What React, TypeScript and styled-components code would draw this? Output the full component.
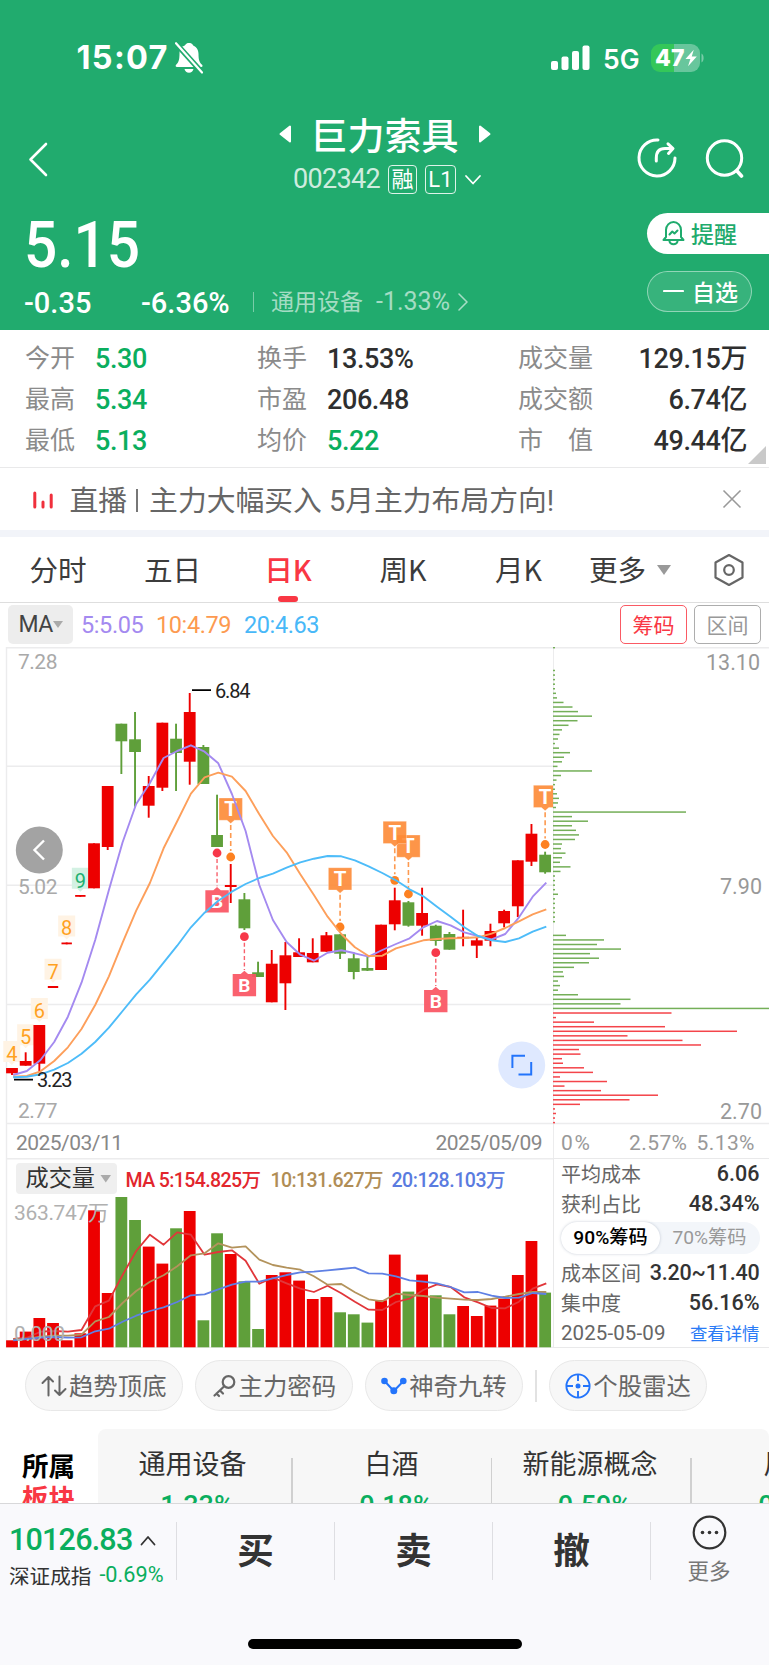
import React from "react";
import styled, { createGlobalStyle } from "styled-components";

const CJK = `"Noto Sans CJK SC", sans-serif`;
const NUM = `Roboto, "Noto Sans CJK SC", sans-serif`;
const GREEN = "#0aae5e";
const UP = "#ed0000";
const DOWN = "#5f9f3a";

const Global = createGlobalStyle`
  * { box-sizing: border-box; }
  body { margin: 0; background: #fff; }
`;

const Page = styled.div`
  width: 769px;
  height: 1665px;
  overflow: hidden;
  display: flex;
  flex-direction: column;
  background: #fff;
  font-family: ${CJK};
  color: #333;
  white-space: nowrap;
  line-height: 1;
`;

const Num = styled.span<{ $size: number; $color?: string; $weight?: number; $ls?: number }>`
  font-family: ${NUM};
  font-size: ${(p) => p.$size}px;
  font-weight: ${(p) => p.$weight ?? 400};
  letter-spacing: ${(p) => p.$ls ?? 0}px;
  color: ${(p) => p.$color ?? "inherit"};
`;

/* ---------- header ---------- */
const Header = styled.header`
  height: 330px;
  flex: none;
  background: #21ab6e;
  color: #fff;
  display: flex;
  flex-direction: column;
`;
const StatusBar = styled.div`
  height: 113px;
  flex: none;
  padding: 3px 65px 0 76.5px;
  display: flex;
  align-items: center;
  font-family: Inter, sans-serif;
`;
const Clock = styled.span`
  font-size: 32.5px;
  font-weight: 700;
  width: 98.5px;
  letter-spacing: 1.3px;
`;
const Network = styled.span`
  font-size: 26.5px;
  font-weight: 600;
  margin: 2px 11px 0 12px;
  width: 37px;
`;
const Spacer = styled.div`
  flex: 1;
`;
const Battery = styled.div`
  width: 49px;
  height: 28px;
  border-radius: 9px;
  background: linear-gradient(90deg, #34c759 0 46%, rgba(255, 255, 255, 0.32) 46%);
  display: flex;
  align-items: center;
  padding-left: 4px;
  font-size: 23px;
  font-weight: 800;
  letter-spacing: 0.2px;
`;
const Nav = styled.div`
  height: 92px;
  flex: none;
  display: flex;
  justify-content: space-between;
  padding: 0 24px 0 28px;
`;
const NavSide = styled.div<{ $right?: boolean }>`
  width: 110px;
  display: flex;
  justify-content: ${(p) => (p.$right ? "flex-end" : "flex-start")};
  gap: 28px;
  padding-top: 25px;
`;
const TitleBlock = styled.div`
  display: flex;
  flex-direction: column;
  align-items: center;
  padding: 1px 0 0 2px;
`;
const TitleRow = styled.div`
  height: 42px;
  margin-right: 6px;
  display: flex;
  align-items: center;
  gap: 19px;
`;
const Title = styled.h1`
  margin: 0;
  font-size: 37px;
  font-weight: 500;
`;
const CodeRow = styled.div`
  height: 52px;
  display: flex;
  align-items: center;
  gap: 8px;
`;
const Badge = styled.span<{ $w: number }>`
  width: ${(p) => p.$w}px;
  height: 29px;
  border: 1.5px solid rgba(255, 255, 255, 0.85);
  border-radius: 4px;
  display: flex;
  align-items: center;
  justify-content: center;
  font: 400 22px/1 ${NUM};
`;
const QuoteRow = styled.div`
  display: flex;
  justify-content: space-between;
  height: 122px;
`;
const PriceBlock = styled.div`
  padding-left: 24px;
  display: flex;
  flex-direction: column;
`;
const Price = styled.div`
  height: 80px;
  padding-top: 2px;
  display: flex;
  align-items: center;
  font: 500 64px/1 ${NUM};
  transform: scaleX(0.915);
  transform-origin: left;
`;
const ChangeRow = styled.div`
  height: 36px;
  display: flex;
  align-items: center;
`;
const ChangeValue = styled.span<{ $w: number }>`
  width: ${(p) => p.$w}px;
  font: 500 29px/1 ${NUM};
`;
const Industry = styled.div`
  display: flex;
  align-items: center;
  color: rgba(255, 255, 255, 0.6);
  font-size: 23px;
  border-left: 1.5px solid rgba(255, 255, 255, 0.4);
  height: 20px;
  padding-left: 17px;
  margin-bottom: 3px;
`;
const IndustryName = styled.span`
  padding-bottom: 3px;
`;
const IndustryRate = styled.span`
  margin: 0 7px 0 13px;
  font: 400 25px/1 ${NUM};
`;
const Actions = styled.div`
  width: 122px;
  padding-top: 8px;
  display: flex;
  flex-direction: column;
  gap: 17px;
`;
const ActionPill = styled.div<{ $solid?: boolean }>`
  height: 41px;
  width: ${(p) => (p.$solid ? 122 : 105)}px;
  border-radius: ${(p) => (p.$solid ? "21px 0 0 21px" : "21px")};
  background: ${(p) => (p.$solid ? "#fff" : "rgba(255,255,255,.1)")};
  border: ${(p) => (p.$solid ? "0" : "1.5px solid rgba(255,255,255,.45)")};
  color: ${(p) => (p.$solid ? "#1fab6d" : "#fff")};
  display: flex;
  align-items: center;
  gap: ${(p) => (p.$solid ? 6 : 8)}px;
  padding-left: 15px;
  padding-bottom: 1px;
  font-size: 23px;
  font-weight: 500;
`;

/* ---------- statistics ---------- */
const Stats = styled.section`
  height: 138px;
  flex: none;
  border-bottom: 1.5px solid #e9e9ea;
  padding: 8px 3px 0 25px;
  display: grid;
  grid-template-columns: 232px 261px 1fr;
  grid-auto-rows: 41px;
  position: relative;
`;
const Stat = styled.div<{ $wide?: boolean }>`
  display: flex;
  align-items: center;
  justify-content: ${(p) => (p.$wide ? "space-between" : "flex-start")};
  padding-right: ${(p) => (p.$wide ? 19 : 0)}px;
  gap: 20px;
`;
const StatLabel = styled.span`
  font-size: 25px;
  color: #8b8b8b;
  white-space: pre;
  padding-bottom: 5px;
`;
const StatValue = styled.span<{ $down?: boolean }>`
  font: 500 27px/1 ${NUM};
  letter-spacing: -0.4px;
  padding-top: 2px;
  color: ${(p) => (p.$down ? GREEN : "#2f2f2f")};
`;
const Corner = styled.i`
  position: absolute;
  right: 3px;
  bottom: 3px;
  border: 9px solid transparent;
  border-right-color: #c9c9c9;
  border-bottom-color: #c9c9c9;
`;

/* ---------- promo ---------- */
const Promo = styled.section`
  height: 69px;
  flex: none;
  border-bottom: 7px solid #f2f4f9;
  padding: 0 27px 0 32.5px;
  display: flex;
  align-items: center;
  color: #666;
  font-size: 28.8px;
`;
const PromoText = styled.span`
  margin-left: 17px;
  padding-top: 4px;
  display: flex;
  align-items: center;
  font-family: ${NUM};
`;
const PromoRule = styled.i`
  width: 2px;
  height: 23px;
  margin: 0 11px 0 9px;
  background: #777;
`;

/* ---------- tabs ---------- */
const Tabs = styled.nav`
  height: 66px;
  flex: none;
  border-bottom: 1.5px solid #dedede;
  display: flex;
  font-size: 28.6px;
`;
const Tab = styled.div<{ $w: number; $active?: boolean }>`
  width: ${(p) => p.$w}px;
  flex: none;
  display: flex;
  align-items: center;
  justify-content: center;
  position: relative;
  color: ${(p) => (p.$active ? "#f93744" : "#3c3c3c")};
  font-weight: ${(p) => (p.$active ? 500 : 400)};
  gap: 11px;
  &::after {
    content: "";
    display: ${(p) => (p.$active ? "block" : "none")};
    position: absolute;
    bottom: 0;
    width: 20px;
    height: 6px;
    border-radius: 3px;
    background: #f93744;
  }
`;
const Caret = styled.i<{ $s: number; $c: string }>`
  width: 0;
  height: 0;
  border: ${(p) => p.$s}px solid transparent;
  border-top: ${(p) => p.$s * 1.4}px solid ${(p) => p.$c};
  border-bottom: 0;
`;

/* ---------- indicator bar ---------- */
const IndicatorBar = styled.div`
  height: 44px;
  flex: none;
  padding: 2px 8px 3px;
  display: flex;
  align-items: center;
`;
const MaButton = styled.div`
  width: 65px;
  height: 39px;
  margin-right: 8px;
  background: #ededed;
  border-radius: 5px;
  display: flex;
  align-items: center;
  justify-content: center;
`;
const MaValue = styled.span<{ $c: string; $w: number }>`
  width: ${(p) => p.$w}px;
  color: ${(p) => p.$c};
  padding-top: 2px;
  font: 400 23.5px/1 ${NUM};
  letter-spacing: -0.4px;
`;
const BoxButton = styled.div<{ $on?: boolean }>`
  width: 67px;
  height: 39px;
  margin-left: 7px;
  border: 1.5px solid ${(p) => (p.$on ? "#fa5a64" : "#adadad")};
  border-radius: 5px;
  color: ${(p) => (p.$on ? "#f93744" : "#999")};
  display: flex;
  align-items: center;
  justify-content: center;
  font-size: 21px;
`;

/* ---------- charts ---------- */
const Charts = styled.section`
  display: grid;
  grid-template-columns: 553px 216px;
  grid-template-rows: 511px 190px;
  flex: none;
`;
const Plot = styled.svg`
  display: block;
  font-family: ${NUM};
`;
const CostPanel = styled.div`
  border-left: 1.5px solid #e9e9ea;
  border-top: 1.5px solid #e9e9ea;
  border-bottom: 1.5px solid #e9e9ea;
  padding: 0 9.5px 0 7px;
  color: #666;
  font-size: 20px;
`;
const CostRow = styled.div`
  height: 30px;
  display: flex;
  align-items: center;
  justify-content: space-between;
`;
const Toggle = styled.div`
  height: 32px;
  width: 199px;
  margin: 3px 0 4px;
  border-radius: 16px;
  background: #f3f6fa;
  display: flex;
`;
const ToggleItem = styled.div<{ $on?: boolean }>`
  width: 99px;
  border-radius: 16px;
  display: flex;
  align-items: center;
  justify-content: center;
  font: ${(p) => (p.$on ? 500 : 400)} 19.2px/1 ${NUM};
  color: ${(p) => (p.$on ? "#000" : "#999")};
  background: ${(p) => (p.$on ? "#fff" : "none")};
  box-shadow: ${(p) => (p.$on ? "0 0 3px rgba(60,80,110,.28)" : "none")};
`;
const Detail = styled.a`
  color: #2a7bf6;
  font-size: 17.4px;
`;

/* ---------- tools ---------- */
const Tools = styled.section`
  height: 81px;
  flex: none;
  padding: 12px 0 0 25px;
  display: flex;
  gap: 12.6px;
`;
const Tool = styled.div`
  width: 157.5px;
  flex: none;
  height: 51px;
  border: 1.5px solid #e8e8e8;
  border-radius: 26px;
  background: #f7f7f7;
  display: flex;
  align-items: center;
  justify-content: center;
  gap: 2px;
  font-size: 24.4px;
  color: #666;
`;
const ToolDivider = styled.i`
  width: 1.5px;
  height: 32px;
  margin-top: 10px;
  background: #e2e2e2;
`;

/* ---------- sectors ---------- */
const Sectors = styled.section`
  height: 74px;
  flex: none;
  display: flex;
  overflow: hidden;
`;
const SectorHead = styled.div`
  width: 98px;
  flex: none;
  padding: 20px 0 0 22px;
  font-size: 26.5px;
  line-height: 32px;
  font-weight: 700;
  color: #000;
`;
const SectorHeadRed = styled.div`
  color: #f93744;
`;
const SectorList = styled.div`
  width: 671px;
  background: #f7f7f7;
  border-radius: 8px 8px 0 0;
  display: flex;
  overflow: hidden;
`;
const Sector = styled.div<{ $w: number; $shift?: number }>`
  width: ${(p) => p.$w}px;
  flex: none;
  display: flex;
  flex-direction: column;
  align-items: center;
  padding: 20px ${(p) => p.$shift ?? 0}px 0 0;
  gap: 17px;
  font-size: 27px;
  color: #333;
`;
const SectorRule = styled.i`
  flex: none;
  width: 1.5px;
  margin-top: 29px;
  background: #d0d0d0;
`;

/* ---------- footer ---------- */
const Footer = styled.footer`
  height: 162px;
  flex: none;
  background: #f9f9fc;
  border-top: 1.5px solid #d8d8da;
  display: flex;
  flex-direction: column;
  align-items: center;
  justify-content: space-between;
  padding-bottom: 16px;
`;
const Trade = styled.div`
  width: 769px;
  height: 92px;
  display: flex;
`;
const IndexBox = styled.div`
  width: 176px;
  padding: 21px 0 0 9px;
`;
const IndexRow = styled.div<{ $h: number }>`
  height: ${(p) => p.$h}px;
  display: flex;
  align-items: center;
  gap: 8px;
  font-size: 20.6px;
  color: #333;
`;
const TradeButton = styled.div<{ $w: number }>`
  width: ${(p) => p.$w}px;
  height: 58px;
  margin-top: 18px;
  padding-bottom: 3px;
  border-left: 1.5px solid #dedee2;
  display: flex;
  align-items: center;
  justify-content: center;
  font-size: 36.5px;
  font-weight: 700;
  color: #333;
`;
const MoreButton = styled.div`
  width: 117px;
  height: 58px;
  margin-top: 18px;
  border-left: 1.5px solid #dedee2;
  display: flex;
  flex-direction: column;
  align-items: center;
  font-size: 21.5px;
  color: #777;
  gap: 9px;
  & > svg {
    margin-top: -7px;
    flex: none;
  }
`;
const HomeBar = styled.div`
  width: 274px;
  height: 10px;
  border-radius: 5px;
  background: #000;
`;

/* ---------- chart data ---------- */
const STEP = 13.67;
const cx = (i: number) => 12 + STEP * i;

// [high, body top, body bottom, low, rising]
const candles: [number, number, number, number, 0 | 1][] = [
  [1068, 1068, 1073.3, 1075, 1],
  [1052.3, 1061, 1065.7, 1065.7, 1],
  [1025, 1025, 1063.7, 1071.6, 1],
  [986, 986, 988, 988, 1],
  [942.5, 942.5, 944.3, 944.3, 1],
  [895, 895, 896.8, 896.8, 1],
  [843.3, 843.3, 888.3, 888.3, 1],
  [786, 786, 847, 850, 1],
  [723.7, 723.7, 741.3, 774, 0],
  [712, 739.3, 752, 806.7, 0],
  [776, 786, 805.7, 817.7, 1],
  [722.7, 722.7, 787.7, 791, 1],
  [723.7, 738.7, 753, 791, 0],
  [693, 712, 761.7, 784.7, 1],
  [745, 747, 784, 784, 0],
  [794.7, 835, 847, 847, 0],
  [864, 885, 887, 903, 1],
  [893, 899.3, 928.3, 930, 0],
  [961.7, 972.3, 977, 977, 0],
  [950, 963.7, 1002.3, 1002.3, 1],
  [942, 955.3, 983.3, 1010, 1],
  [938.3, 952.3, 957, 957, 1],
  [938.3, 953, 962.3, 962.3, 1],
  [932, 935.3, 951.7, 951.7, 1],
  [934.3, 934.3, 953.7, 959, 0],
  [954, 958.3, 972, 979.3, 0],
  [956.7, 968, 970.7, 971, 0],
  [924.7, 924.7, 970, 970, 1],
  [887.7, 900.3, 924.3, 930.3, 1],
  [901, 902.3, 925.7, 926.7, 0],
  [887.7, 913, 925.7, 935.7, 1],
  [924.7, 925.7, 941, 945.7, 0],
  [932, 934, 949.7, 949.7, 0],
  [909.7, 936.8, 938.3, 946.3, 1],
  [938, 940.3, 945.7, 958, 1],
  [923.7, 931, 940.7, 946.3, 1],
  [909.7, 911, 923.3, 927.3, 1],
  [860.3, 860.3, 906.3, 917, 1],
  [824, 833.7, 861.7, 866, 1],
  [851.7, 854.7, 872.3, 873.7, 0],
];

const ma5 = [1075, 1071, 1060, 1042, 1016.7, 982.7, 940, 890, 842.3, 804, 783, 758, 751, 745.3, 751.7, 763.3, 794, 831, 885, 920, 942, 954.7, 960.7, 952.7, 950.3, 953.3, 956.7, 950, 944, 938.3, 927.3, 921, 925.3, 932.3, 936, 939.3, 934, 917.3, 896.7, 882.7];
const ma10 = [1076.7, 1076, 1071.3, 1061, 1047.3, 1029, 1005, 976.3, 942.7, 910.7, 883, 848.3, 821.3, 793.7, 777.3, 772.7, 776.7, 791, 814.3, 836, 852.3, 874.3, 895, 916.7, 934, 947.3, 956, 955.7, 948.3, 944.3, 940.3, 939, 938.3, 938, 937.3, 933.7, 928, 921.3, 914.3, 909.3];
const ma20 = [1077.3, 1076.7, 1074.3, 1069.7, 1063, 1053.7, 1042, 1027.7, 1011, 994.3, 979.7, 962.7, 945.7, 927.3, 912.7, 900.7, 891.7, 884, 878, 873.7, 867.7, 862.3, 858.7, 856, 856.3, 860.3, 866.3, 873, 880.3, 889.3, 896.3, 906.7, 916.7, 927.3, 936, 940.3, 942, 938.3, 931.7, 926.7];

const line = (ys: number[]) => ys.map((y, i) => `${(cx(i) + 1.2).toFixed(1)},${y}`).join(" ");

// volume bars: height above the baseline and direction
const volumes: [number, 0 | 1][] = [
  [7, 1], [15.7, 1], [29.3, 1], [24.3, 1], [7, 1], [14, 1], [137, 1], [54.3, 1], [150.3, 0], [127.3, 0],
  [100.7, 1], [83.7, 1], [119, 0], [136.3, 1], [27, 0], [114, 0], [93.3, 1], [66, 0], [18.3, 0], [72.3, 1],
  [75, 1], [66.7, 1], [48.3, 1], [50.3, 1], [35, 0], [33, 0], [24.7, 0], [47, 1], [92.7, 1], [55.7, 0],
  [72.7, 1], [52, 0], [33, 0], [41.3, 1], [31.3, 1], [41.7, 1], [48.7, 1], [72.3, 1], [106.3, 1], [54.7, 0],
];
const vol5 = [552, 548, 530, 528, 530, 525, 454, 437, 360, 288, 239, 269, 232, 239, 299, 291, 286, 317, 386, 368, 385, 401, 411, 392, 415, 440, 464, 465, 441, 431, 405, 388, 396, 427, 442, 459, 460, 440, 401, 385];
const vol10 = [553, 552, 545, 542, 542, 539, 499, 486, 444, 408, 380, 361, 334, 301, 295, 265, 278, 274, 314, 330, 338, 344, 364, 389, 387, 412, 433, 439, 416, 420, 423, 428, 431, 434, 435, 432, 425, 417, 411, 411];
const vol20 = [556, 552, 548, 546, 548, 547, 529, 521, 500, 482, 468, 457, 441, 421, 418, 403, 389, 380, 380, 370, 360, 352, 350, 346, 342, 338, 355, 356, 364, 376, 380, 385, 396, 412, 411, 422, 429, 428, 414, 417];
const volLine = (v: number[]) => line(v.map((y) => +(1155 + y / 3).toFixed(1)));

// cost distribution, one bar per price level from the top down
const chips = [
  2, 0, 0, 0, 0, 2, 2, 2, 2, 2,
  3, 4, 10.5, 19.5, 25, 39, 24.5, 15.5, 9, 6.5, 5, 2, 6, 17, 11, 9, 4.5, 39, 8, 3.5,
  2, 2, 4, 6, 5, 3, 133, 19, 35, 19, 23, 26, 22, 9, 8, 12.5, 9, 7, 17.5, 7.5,
  2, 2, 2, 2, 5, 2, 2, 2, 2, 2, 2, 0, 0,
  13, 51, 44, 68, 37, 46, 36, 21, 10, 11, 5, 7, 5, 25, 77.5, 67.5, 216,
  118.5, 3, 41, 112, 184, 74.5, 129.5, 148, 26, 27.5, 9, 10, 31, 40, 7, 54, 11.5, 48, 105, 76.5, 27, 2, 3, 2, 2,
];
const FIRST_PROFIT_LEVEL = 80;

// [candle, flag top, dot y]
const sells: [number, number, number][] = [
  [16, 798, 857],
  [24, 867.7, 927],
  [29, 835, 894],
  [28, 821.3, 880.3],
  [39, 785.3, 844.5],
];
const buys: [number, number, number][] = [
  [15, 890.3, 853],
  [17, 974, 936.7],
  [31, 990, 952.7],
];
const counts: [string, number, number][] = [
  ["4", 0, 1041],
  ["5", 1, 1024.3],
  ["6", 2, 998],
  ["7", 3, 958.7],
  ["8", 4, 915.5],
  ["9", 5, 867.7],
];

const GRID = "#ececed";

function SellFlag({ x, y, dot }: { x: number; y: number; dot: number }) {
  return (
    <g>
      <line x1={x} x2={x} y1={y + 27} y2={dot - 6} stroke="#fd9a50" strokeWidth="1.6" strokeDasharray="5 3" />
      <circle cx={x} cy={dot} r="4.4" fill="#fd8121" />
      <path d={`M${x - 11.7} ${y}h23.4v22.3h-8l-3.7 3.2l-3.7-3.2h-8z`} fill="#fd8a35" fillOpacity=".9" stroke="#fff" strokeOpacity=".5" strokeWidth=".6" />
      <text x={x} y={y + 18.3} fontSize="20.5" fontWeight="700" fill="#fff" textAnchor="middle">T</text>
    </g>
  );
}

function BuyFlag({ x, y, dot }: { x: number; y: number; dot: number }) {
  return (
    <g>
      <line x1={x} x2={x} y1={dot + 6} y2={y - 4} stroke="#f7606c" strokeWidth="1.4" strokeDasharray="4 2.6" />
      <circle cx={x} cy={dot} r="4.4" fill="#f7384a" />
      <path d={`M${x - 11.7} ${y}h8l3.7-3.2l3.7 3.2h8v22.2h-23.4z`} fill="#fa5563" fillOpacity=".93" />
      <text x={x} y={y + 18} fontSize="19" fontWeight="700" fill="#fff" textAnchor="middle">B</text>
    </g>
  );
}

function KLine() {
  return (
    <Plot width="553" height="511" viewBox="0 647 553 511">
      <g stroke={GRID} strokeWidth="1.4">
        <path d="M6 647.7H553M6 766.2H553M6 885.3H553M6 1004.5H553M6 1123.5H553M6.5 647V1158" fill="none" />
      </g>
      <g fill="#a9a9a9" fontSize="21">
        <text x="18" y="669" textLength="39.5">7.28</text>
        <text x="18" y="893.5" textLength="39.5">5.02</text>
        <text x="18" y="1118" textLength="39.5">2.77</text>
      </g>
      {counts.map(([t, i, y]) => {
        const x = i === 0 ? 11.8 : cx(i);
        return (
          <g key={t}>
            <path d={`M${x - 8.5} ${y}h17v21h-5.5l-3 3l-3-3h-5.5z`} fill={t === "9" ? "#d3f1e3" : "#fff3e4"} />
            <text x={x} y={y + 19.8} fontSize="20" textAnchor="middle" fill={t === "9" ? "#22b071" : "#ffa11f"}>{t}</text>
          </g>
        );
      })}
      {candles.map(([h, t, b, l, up], i) => {
        const w = i > 2 && i < 6 ? 10.4 : 11.8;
        return (
          <g key={i} fill={up ? UP : DOWN}>
            <rect x={cx(i) - 0.95} y={h} width="1.9" height={l - h} />
            <rect x={cx(i) - w / 2} y={t} width={w} height={b - t} />
          </g>
        );
      })}
      {buys.map(([i, y, d]) => <BuyFlag key={i} x={cx(i)} y={y} dot={d} />)}
      {sells.map(([i, y, d]) => <SellFlag key={i} x={cx(i)} y={y} dot={d} />)}
      <g fill="none" strokeWidth="1.9" strokeLinejoin="round">
        <polyline points={line(ma5)} stroke="#a48af0" />
        <polyline points={line(ma10)} stroke="#fd9f5b" />
        <polyline points={line(ma20)} stroke="#4dbcf9" />
      </g>
      <path d="M192 690.2H211M14 1079.7H33" stroke="#000" strokeWidth="1.8" />
      <g fill="#222" fontSize="20">
        <text x="215" y="698.3" textLength="35.5">6.84</text>
        <text x="37" y="1087.3" textLength="35.5">3.23</text>
      </g>
      <circle cx="39.3" cy="850" r="23.5" fill="#a3a3a3" />
      <path d="M44 840.5L34.5 850L44 859.5" fill="none" stroke="#fff" strokeWidth="2.4" />
      <circle cx="521.7" cy="1065" r="23.5" fill="#dfe9ff" />
      <path d="M525 1055.8H512.4V1068M518.5 1074.4H531.2V1062" fill="none" stroke="#2374fb" strokeWidth="2" />
      <g fill="#888" fontSize="21">
        <text x="16" y="1149.8" textLength="107">2025/03/11</text>
        <text x="435.500" y="1149.8" textLength="107">2025/05/09</text>
      </g>
    </Plot>
  );
}

function ChipChart() {
  return (
    <Plot width="216" height="511" viewBox="553 647 216 511">
      <path d="M553 647.7H769M553 1123.5H769M553.3 647V1158" stroke={GRID} strokeWidth="1.4" fill="none" />
      {chips.map((w, i) =>
        w ? <rect key={i} x="553" y={646.9 + i * 4.567} width={w} height="1.5" fill={i < FIRST_PROFIT_LEVEL ? "#74af58" : "#f4444a"} /> : null
      )}
      <g fill="#999" fontSize="21.5">
        <text x="706" y="669.5" textLength="54">13.10</text>
        <text x="720" y="894" textLength="42">7.90</text>
        <text x="720" y="1118.500" textLength="42">2.70</text>
        <text x="561" y="1149.8" textLength="29" fontSize="21">0%</text>
        <text x="629" y="1149.8" textLength="58" fontSize="21">2.57%</text>
        <text x="696.5" y="1149.8" textLength="58" fontSize="21">5.13%</text>
      </g>
    </Plot>
  );
}

function VolumeChart() {
  return (
    <Plot width="553" height="190" viewBox="0 1158 553 190">
      <path d="M6 1158.7H553M6 1347.5H553M6.5 1158V1348" stroke={GRID} strokeWidth="1.4" fill="none" />
      {volumes.map(([h, up], i) => (
        <rect key={i} x={cx(i) - 5.9} y={1347.3 - h} width="11.8" height={h} fill={up ? UP : DOWN} />
      ))}
      <rect x="16" y="1163" width="101" height="31" rx="4" fill="#efefef" />
      <text x="25.5" y="1186" fontSize="23.2" fill="#333">成交量</text>
      <path d="M100.5 1175H111l-5.2 7.5z" fill="#aaa" />
      <g fontSize="19.5" fontWeight="500">
        <text x="125.5" y="1186.5" textLength="135.500" fill="#e2262d">MA 5:154.825万</text>
        <text x="270.5" y="1186.5" textLength="113" fill="#b08d55">10:131.627万</text>
        <text x="391.5" y="1186.5" textLength="114" fill="#5a7be0">20:128.103万</text>
      </g>
      <g fill="none" strokeWidth="1.8" strokeLinejoin="round">
        <polyline points={volLine(vol5)} stroke="#e1363a" />
        <polyline points={volLine(vol10)} stroke="#b3935c" />
        <polyline points={volLine(vol20)} stroke="#5f80e4" />
      </g>
      <g fill="#b0b0b0" fontSize="21">
        <text x="14" y="1220.3" textLength="95">363.747万</text>
        <text x="14" y="1340.6" textLength="51">0.000</text>
      </g>
    </Plot>
  );
}

/* ---------- icons ---------- */
const stroke = { fill: "none", stroke: "currentColor", strokeLinecap: "round", strokeLinejoin: "round" } as const;

const MutedBell = () => (
  <svg width="28" height="32" viewBox="0 0 28 32" fill="#fff">
    <path d="M5 3.2C7.5 5 8 4.600 10 3.200C11 1.500 12.300 1 14 1s3.300.6 4.200 2.400C22 5 23.500 8.500 23.500 12c0 6 1 8.500 3.600 10.800c.8.9.5 2.200-.8 2.200H2c-1.400 0-1.800-1.300-.9-2.200C4 20 4.400 17 4.500 12c0-2.800.3-4.200 1.500-6z" />
    <path d="M9.500 27h9c-.6 2.400-2.200 3.700-4.500 3.700S10 29.400 9.500 27z" />
    <path d="M.5 1L27.500 31" stroke="#21ab6e" strokeWidth="5.500" />
    <path d="M1 1.200L27 30.500" stroke="#fff" strokeWidth="2.200" strokeLinecap="round" />
  </svg>
);
const Signal = () => (
  <svg width="40" height="26" viewBox="0 0 40 26" fill="#fff">
    <rect x="0" y="16" width="7" height="9" rx="2" />
    <rect x="10.500" y="11.500" width="7" height="13.500" rx="2" />
    <rect x="21" y="6" width="7" height="19" rx="2" />
    <rect x="31.500" y="0.500" width="7" height="24.500" rx="2" />
  </svg>
);

export default function App() {
  return (
    <Page>
      <Global />
      <Header>
        <StatusBar>
          <Clock>15:07</Clock>
          <MutedBell />
          <Spacer />
          <Signal />
          <Network>5G</Network>
          <Battery>
            47
            <svg width="12" height="18" viewBox="0 0 13 18"><path d="M9.500 0L.5 10.200H5.800L3.300 18L12.800 7.300H7.300z" fill="#fff" /></svg>
          </Battery>
          <svg width="4" height="10" viewBox="0 0 4 10"><path d="M1.500 .5C4.300 2 4.300 8 1.500 9.500z" fill="#fff" fillOpacity=".4" /></svg>
        </StatusBar>
        <Nav>
          <NavSide>
            <svg width="20" height="42" viewBox="0 0 20 42"><path d="M18 6L2.500 21.500L18 37" {...stroke} strokeWidth="2.600" /></svg>
          </NavSide>
          <TitleBlock>
            <TitleRow>
              <svg width="13" height="18" viewBox="0 0 13 18"><path d="M11 1.500V16.500L1.500 9z" fill="#fff" stroke="#fff" strokeWidth="2" strokeLinejoin="round" /></svg>
              <Title>巨力索具</Title>
              <svg width="13" height="18" viewBox="0 0 13 18"><path d="M2 1.500V16.500L11.500 9z" fill="#fff" stroke="#fff" strokeWidth="2" strokeLinejoin="round" /></svg>
            </TitleRow>
            <CodeRow>
              <Num $size={27} $ls={-0.7} $color="rgba(255,255,255,.8)">002342</Num>
              <Badge $w={29}>融</Badge>
              <Badge $w={31}>L1</Badge>
              <svg width="18" height="12" viewBox="0 0 18 12"><path d="M2 2L9 9.500L16 2" {...stroke} strokeWidth="1.800" /></svg>
            </CodeRow>
          </TitleBlock>
          <NavSide $right>
            <svg width="40" height="40" viewBox="0 0 40 40">
              <path d="M21 2A18 18 0 1 0 38 20" {...stroke} strokeWidth="3" />
              <path d="M19.300 23V20C19.300 13 22.500 10.500 28 10.500H35M31 5.800L36 10.500L31.500 15.500" {...stroke} strokeWidth="3" />
            </svg>
            <svg width="40" height="40" viewBox="0 0 40 40">
              <circle cx="19.500" cy="20" r="17.200" {...stroke} strokeWidth="3" />
              <path d="M32 33L36.500 38" {...stroke} strokeWidth="3.600" />
            </svg>
          </NavSide>
        </Nav>
        <QuoteRow>
          <PriceBlock>
            <Price>5.15</Price>
            <ChangeRow>
              <ChangeValue $w={117}>-0.35</ChangeValue>
              <ChangeValue $w={112}>-6.36%</ChangeValue>
              <Industry>
                <IndustryName>通用设备</IndustryName>
                <IndustryRate>-1.33%</IndustryRate>
                <svg width="12" height="20" viewBox="0 0 12 20"><path d="M2 2L10 10L2 18" {...stroke} strokeWidth="1.600" /></svg>
              </Industry>
            </ChangeRow>
          </PriceBlock>
          <Actions>
            <ActionPill $solid>
              <svg width="23" height="26" viewBox="0 0 23 26">
                <path d="M1.500 20L4 17V10A7.500 8 0 0 1 19 10V17L21.500 20z" {...stroke} strokeWidth="2" />
                <path d="M7.500 14.500L10.300 11.500L12.500 13.500L15.500 10.500M7.500 21.500C8.500 25 14.500 25 15.500 21.500" {...stroke} strokeWidth="2" />
              </svg>
              提醒
            </ActionPill>
            <ActionPill>
              <svg width="21" height="4" viewBox="0 0 21 4"><path d="M1 2H20" {...stroke} strokeWidth="2.200" /></svg>
              自选
            </ActionPill>
          </Actions>
        </QuoteRow>
      </Header>

      <Stats>
        <Stat><StatLabel>今开</StatLabel><StatValue $down>5.30</StatValue></Stat>
        <Stat><StatLabel>换手</StatLabel><StatValue>13.53%</StatValue></Stat>
        <Stat $wide><StatLabel>成交量</StatLabel><StatValue>129.15万</StatValue></Stat>
        <Stat><StatLabel>最高</StatLabel><StatValue $down>5.34</StatValue></Stat>
        <Stat><StatLabel>市盈</StatLabel><StatValue>206.48</StatValue></Stat>
        <Stat $wide><StatLabel>成交额</StatLabel><StatValue>6.74亿</StatValue></Stat>
        <Stat><StatLabel>最低</StatLabel><StatValue $down>5.13</StatValue></Stat>
        <Stat><StatLabel>均价</StatLabel><StatValue $down>5.22</StatValue></Stat>
        <Stat $wide><StatLabel>市　值</StatLabel><StatValue>49.44亿</StatValue></Stat>
        <Corner />
      </Stats>

      <Promo>
        <svg width="20" height="20" viewBox="0 0 20 20" stroke="#f0303c" strokeWidth="3" strokeLinecap="round"><path d="M1.800 4V18M10 13V18M18.200 6V18" /></svg>
        <PromoText>直播<PromoRule />主力大幅买入 5月主力布局方向!</PromoText>
        <Spacer />
        <svg width="20" height="20" viewBox="0 0 20 20"><path d="M1.500 1.500L18.500 18.500M18.500 1.500L1.500 18.500" stroke="#999" strokeWidth="1.600" /></svg>
      </Promo>

      <Tabs>
        <Tab $w={116}>分时</Tab>
        <Tab $w={113}>五日</Tab>
        <Tab $w={118} $active>日K</Tab>
        <Tab $w={112}>周K</Tab>
        <Tab $w={119}>月K</Tab>
        <Tab $w={104}>更多<Caret $s={7.500} $c="#999" /></Tab>
        <Tab $w={93}>
          <svg width="32" height="34" viewBox="0 0 32 34"><path d="M16 2L29.500 9.500V24.500L16 32L2.500 24.500V9.500z" {...stroke} strokeWidth="2.200" stroke="#666" /><circle cx="16" cy="17" r="4.800" {...stroke} strokeWidth="2.200" stroke="#666" /></svg>
        </Tab>
      </Tabs>

      <IndicatorBar>
        <MaButton><Num $size={23} $weight={400} $color="#444" $ls={-0.600}>MA</Num><Caret $s={5.500} $c="#aaa" /></MaButton>
        <MaValue $c="#a48af0" $w={75}>5:5.05</MaValue>
        <MaValue $c="#fd9a50" $w={88}>10:4.79</MaValue>
        <MaValue $c="#48b8f8" $w={88}>20:4.63</MaValue>
        <Spacer />
        <BoxButton $on>筹码</BoxButton>
        <BoxButton>区间</BoxButton>
      </IndicatorBar>

      <Charts>
        <KLine />
        <ChipChart />
        <VolumeChart />
        <CostPanel>
          <CostRow>平均成本<Num $size={21.500} $weight={500} $color="#333">6.06</Num></CostRow>
          <CostRow>获利占比<Num $size={21.500} $weight={500} $color="#333">48.34%</Num></CostRow>
          <Toggle><ToggleItem $on>90%筹码</ToggleItem><ToggleItem>70%筹码</ToggleItem></Toggle>
          <CostRow>成本区间<Num $size={21.500} $weight={500} $ls={-0.200} $color="#333">3.20~11.40</Num></CostRow>
          <CostRow>集中度<Num $size={21.500} $weight={500} $color="#333">56.16%</Num></CostRow>
          <CostRow><Num $size={20.500} $ls={0.100}>2025-05-09</Num><Detail>查看详情</Detail></CostRow>
        </CostPanel>
      </Charts>

      <Tools>
        <Tool>
          <svg width="26" height="22" viewBox="0 0 26 22"><path d="M7.500 20.500V2M1.500 8L7.500 2L12 6.500M18.500 1.500V20M14 15.500L18.500 20L24.500 14" {...stroke} strokeWidth="2" /></svg>
          趋势顶底
        </Tool>
        <Tool>
          <svg width="25" height="24" viewBox="0 0 25 24"><circle cx="16.500" cy="8" r="5.800" {...stroke} strokeWidth="2.200" /><path d="M12 12.500L2.500 21.500M8 16.500L11 19.500M4.500 19.500L7 22" {...stroke} strokeWidth="2.200" /></svg>
          主力密码
        </Tool>
        <Tool>
          <svg width="26" height="18" viewBox="0 0 26 18"><path d="M4 4.500L12.800 14L22 4.500" fill="none" stroke="#2374fb" strokeWidth="2" /><g fill="#2374fb"><circle cx="3.500" cy="4" r="3.300" /><circle cx="12.800" cy="13.800" r="3.500" /><circle cx="22.300" cy="4" r="3.300" /></g></svg>
          神奇九转
        </Tool>
        <ToolDivider />
        <Tool>
          <svg width="26" height="26" viewBox="0 0 26 26"><circle cx="13" cy="13" r="11.600" fill="none" stroke="#2374fb" strokeWidth="1.900" /><path d="M13 2V8M13 18V24M2 13H8M18 13H24" stroke="#2374fb" strokeWidth="1.900" /><circle cx="13" cy="13" r="2.500" fill="#2374fb" /></svg>
          个股雷达
        </Tool>
      </Tools>

      <Sectors>
        <SectorHead>所属<SectorHeadRed>板块</SectorHeadRed></SectorHead>
        <SectorList>
          <Sector $w={193} $shift={4}>通用设备<Num $size={27} $weight={500} $color={GREEN}>-1.33%</Num></Sector>
          <SectorRule />
          <Sector $w={198}>白酒<Num $size={27} $weight={500} $color={GREEN}>-0.18%</Num></Sector>
          <SectorRule />
          <Sector $w={198} $shift={2}>新能源概念<Num $size={27} $weight={500} $color={GREEN}>-0.59%</Num></Sector>
          <SectorRule />
          <Sector $w={198}>风电<Num $size={27} $weight={500} $color={GREEN}>-0.93%</Num></Sector>
        </SectorList>
      </Sectors>

      <Footer>
        <Trade>
          <IndexBox>
            <IndexRow $h={31}><Num $size={30.500} $weight={500} $ls={-0.800} $color={GREEN}>10126.83</Num>
              <svg width="16" height="11" viewBox="0 0 16 11"><path d="M1.500 9.500L8 2L14.500 9.500" {...stroke} strokeWidth="1.800" /></svg>
            </IndexRow>
            <IndexRow $h={38}>深证成指<Num $size={21.700} $color={GREEN}>-0.69%</Num></IndexRow>
          </IndexBox>
          <TradeButton $w={158}>买</TradeButton>
          <TradeButton $w={158}>卖</TradeButton>
          <TradeButton $w={158}>撤</TradeButton>
          <MoreButton>
            <svg width="35" height="35" viewBox="0 0 35 35"><circle cx="17.500" cy="17.500" r="15.800" fill="none" stroke="#333" strokeWidth="2.200" /><g fill="#333"><circle cx="10.500" cy="17.500" r="1.800" /><circle cx="17.500" cy="17.500" r="1.800" /><circle cx="24.500" cy="17.500" r="1.800" /></g></svg>
            更多
          </MoreButton>
        </Trade>
        <HomeBar />
      </Footer>
    </Page>
  );
}
